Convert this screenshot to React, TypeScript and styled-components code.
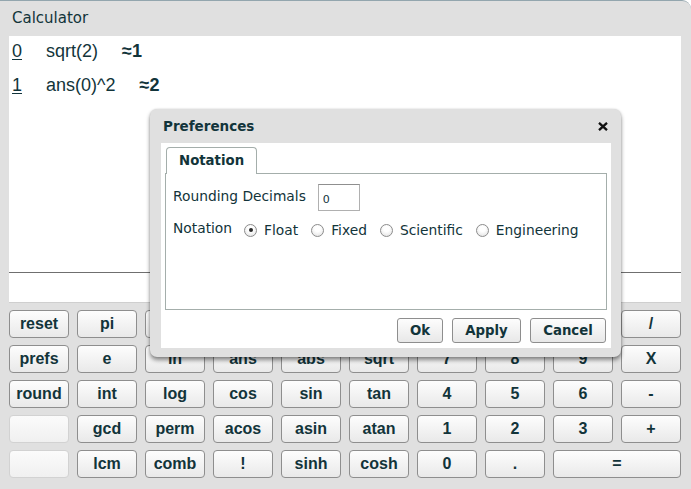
import * as React from 'react';
import styled, { createGlobalStyle } from 'styled-components';

const GlobalStyle = createGlobalStyle`
  html, body {
    margin: 0;
    padding: 0;
    background: #ffffff;
  }
`;

const ink = '#12343a';
const uiFont = `"DejaVu Sans", Verdana, sans-serif`;
const numFont = `"Liberation Sans", Arial, sans-serif`;

const Frame = styled.div`
  position: relative;
  width: 691px;
  height: 489px;
  box-sizing: border-box;
  background: #e0e0e0;
  border-top: 1px solid #93a6ae;
  border-top-right-radius: 9px;
  padding: 0 10px 0 9px;
  display: flex;
  flex-direction: column;
  color: ${ink};
  overflow: hidden;
`;

const TitleBar = styled.div`
  height: 35px;
  display: flex;
  align-items: center;
  padding-left: 3px;
  font-family: ${uiFont};
  font-size: 15px;
  line-height: 1;
`;

const History = styled.div`
  height: 236px;
  background: #ffffff;
  padding: 2px 3px 0;
  box-sizing: border-box;
  display: flex;
  flex-direction: column;
  gap: 8px;
`;

const HistoryRow = styled.div`
  display: flex;
  gap: 24px;
  font-family: ${numFont};
  font-size: 18px;
  line-height: 26px;
`;

const Index = styled.span`
  text-decoration: underline;
  text-underline-offset: 2px;
`;

const Result = styled.span`
  font-weight: bold;
`;

const Entry = styled.input`
  height: 31px;
  box-sizing: border-box;
  border: none;
  border-top: 1px solid #6f6f6f;
  border-bottom: 1px solid #cfcfcf;
  background: #ffffff;
  outline: none;
  padding: 0 4px;
  font-family: ${numFont};
  font-size: 16px;
`;

const Keypad = styled.div`
  margin-top: 7px;
  display: grid;
  grid-template-columns: repeat(10, 60px);
  grid-auto-rows: 28px;
  column-gap: 8px;
  row-gap: 7px;
`;

const Key = styled.button<{ $wide?: boolean }>`
  grid-column: span ${(p) => (p.$wide ? 2 : 1)};
  box-sizing: border-box;
  margin: 0;
  padding: 0;
  border: 1px solid #8e8e8e;
  border-radius: 4px;
  background: linear-gradient(#fdfdfd, #e9e9e9);
  font-family: ${numFont};
  font-weight: bold;
  font-size: 16px;
  color: ${ink};
  cursor: pointer;

  &:disabled {
    border-color: #d2d2d2;
    background: linear-gradient(#fbfbfb, #f0f0f0);
    cursor: default;
  }
`;

const Dialog = styled.div`
  position: absolute;
  left: 150px;
  top: 108px;
  width: 471px;
  height: 248px;
  box-sizing: border-box;
  background: #e0e0e0;
  border-radius: 7px;
  padding: 0 10px 9px 11px;
  display: flex;
  flex-direction: column;
  box-shadow: 0 3px 4px rgba(0, 0, 0, 0.45), 0 0 2px rgba(0, 0, 0, 0.15);
  font-family: ${uiFont};
  color: ${ink};
`;

const DialogHeader = styled.div`
  height: 34px;
  display: flex;
  align-items: center;
  justify-content: space-between;
  padding: 0 3px 0 2px;
`;

const DialogTitle = styled.div`
  font-weight: bold;
  font-size: 13.5px;
`;

const CloseIcon = styled.svg`
  width: 10px;
  height: 9px;
  display: block;
  margin-top: 1px;
`;

const DialogBody = styled.div`
  flex: 1;
  background: #ffffff;
  padding: 4px 4px 5px;
  display: flex;
  flex-direction: column;
`;

const TabBar = styled.div`
  height: 26px;
  display: flex;
  align-items: flex-end;
  padding-left: 1px;
  position: relative;
  z-index: 1;
`;

const Tab = styled.div<{ $active?: boolean }>`
  height: 27px;
  box-sizing: border-box;
  margin-bottom: -1px;
  padding: 5px 12px 0;
  border: 1px solid #a4aeab;
  border-bottom: none;
  border-radius: 4px 4px 0 0;
  background: ${(p) => (p.$active ? '#ffffff' : '#ececec')};
  font-weight: bold;
  font-size: 13.3px;
`;

const TabPanel = styled.div`
  height: 137px;
  box-sizing: border-box;
  border: 1px solid #a4aeab;
  padding: 10px 7px 0;
  display: flex;
  flex-direction: column;
  gap: 9px;
  font-size: 13.8px;
`;

const FieldRow = styled.div<{ $height: number }>`
  height: ${(p) => p.$height}px;
  display: flex;
  align-items: center;
`;

const FieldLabel = styled.span<{ $lift: number }>`
  margin-right: 12px;
  margin-bottom: ${(p) => p.$lift}px;
`;

const NumberBox = styled.input`
  width: 42px;
  height: 27px;
  box-sizing: border-box;
  border: 1px solid #b0b0b0;
  border-top-color: #8f8f8f;
  padding: 3px 4px 0;
  font-family: ${uiFont};
  font-size: 11px;
  color: ${ink};
  outline: none;
`;

const RadioOption = styled.label`
  display: flex;
  align-items: center;
  margin-right: 13px;
  cursor: pointer;
`;

const RadioDot = styled.span<{ $checked?: boolean }>`
  width: 13px;
  height: 13px;
  box-sizing: border-box;
  border-radius: 50%;
  border: 1px solid #8c8c8c;
  background: radial-gradient(circle at 50% 35%, #ffffff 30%, #dedede 100%);
  margin-right: 7px;
  display: flex;
  align-items: center;
  justify-content: center;

  &::after {
    content: '';
    width: 4px;
    height: 4px;
    border-radius: 50%;
    background: ${(p) => (p.$checked ? '#2a2a2a' : 'transparent')};
  }
`;

const DialogButtons = styled.div`
  margin-top: 8px;
  display: flex;
  justify-content: flex-end;
  gap: 9px;
  padding-right: 1px;
`;

const DialogButton = styled.button<{ $w: number }>`
  width: ${(p) => p.$w}px;
  height: 25px;
  box-sizing: border-box;
  margin: 0;
  padding: 0;
  border: 1px solid #8e8e8e;
  border-radius: 3px;
  background: linear-gradient(#fdfdfd, #e8e8e8);
  font-family: ${uiFont};
  font-weight: bold;
  font-size: 13.3px;
  color: ${ink};
  cursor: pointer;
`;

// first-row keys 3..9 sit fully under the preferences dialog
const keys: { label: string; wide?: boolean; disabled?: boolean }[] = [
  { label: 'reset' }, { label: 'pi' }, { label: '' }, { label: '' }, { label: '' },
  { label: '' }, { label: '' }, { label: '' }, { label: '' }, { label: '/' },
  { label: 'prefs' }, { label: 'e' }, { label: 'ln' }, { label: 'ans' }, { label: 'abs' },
  { label: 'sqrt' }, { label: '7' }, { label: '8' }, { label: '9' }, { label: 'X' },
  { label: 'round' }, { label: 'int' }, { label: 'log' }, { label: 'cos' }, { label: 'sin' },
  { label: 'tan' }, { label: '4' }, { label: '5' }, { label: '6' }, { label: '-' },
  { label: '', disabled: true }, { label: 'gcd' }, { label: 'perm' }, { label: 'acos' }, { label: 'asin' },
  { label: 'atan' }, { label: '1' }, { label: '2' }, { label: '3' }, { label: '+' },
  { label: '', disabled: true }, { label: 'lcm' }, { label: 'comb' }, { label: '!' }, { label: 'sinh' },
  { label: 'cosh' }, { label: '0' }, { label: '.' }, { label: '=', wide: true },
];

const history = [
  { expr: 'sqrt(2)', result: '≈1' },
  { expr: 'ans(0)^2', result: '≈2' },
];

const notations = ['Float', 'Fixed', 'Scientific', 'Engineering'];

export default function App() {
  const [notation, setNotation] = React.useState('Float');

  return (
    <>
      <GlobalStyle />
      <Frame>
        <TitleBar>Calculator</TitleBar>
        <History>
          {history.map((h, i) => (
            <HistoryRow key={i}>
              <Index>{i}</Index>
              <span>{h.expr}</span>
              <Result>{h.result}</Result>
            </HistoryRow>
          ))}
        </History>
        <Entry type="text" />
        <Keypad>
          {keys.map((k, i) => (
            <Key key={i} $wide={k.wide} disabled={k.disabled}>
              {k.label}
            </Key>
          ))}
        </Keypad>

        <Dialog>
          <DialogHeader>
            <DialogTitle>Preferences</DialogTitle>
            <CloseIcon viewBox="0 0 10 9">
              <path d="M1 0.8 L9 8.2 M9 0.8 L1 8.2" stroke="#111" strokeWidth="2.3" strokeLinecap="butt" />
            </CloseIcon>
          </DialogHeader>
          <DialogBody>
            <TabBar>
              <Tab $active>Notation</Tab>
            </TabBar>
            <TabPanel>
              <FieldRow $height={27}>
                <FieldLabel $lift={4}>Rounding Decimals</FieldLabel>
                <NumberBox type="text" defaultValue="0" />
              </FieldRow>
              <FieldRow $height={20}>
                <FieldLabel $lift={5}>Notation</FieldLabel>
                {notations.map((n) => (
                  <RadioOption key={n} onClick={() => setNotation(n)}>
                    <RadioDot $checked={notation === n} />
                    {n}
                  </RadioOption>
                ))}
              </FieldRow>
            </TabPanel>
            <DialogButtons>
              <DialogButton $w={46}>Ok</DialogButton>
              <DialogButton $w={69}>Apply</DialogButton>
              <DialogButton $w={76}>Cancel</DialogButton>
            </DialogButtons>
          </DialogBody>
        </Dialog>
      </Frame>
    </>
  );
}
